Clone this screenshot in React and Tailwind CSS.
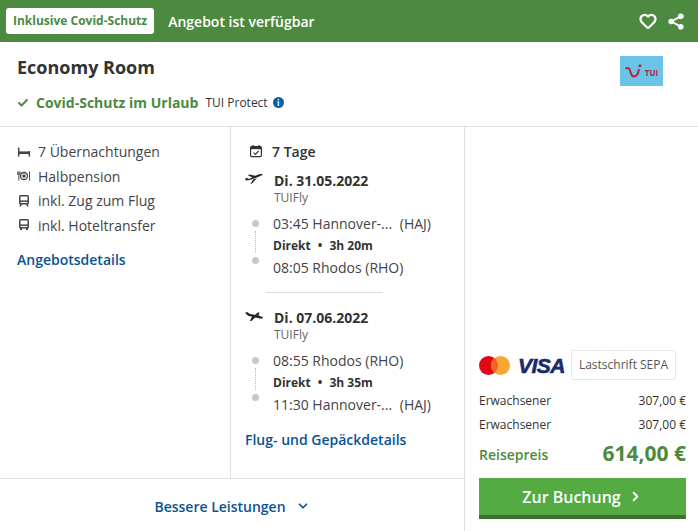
import { Check, ChevronDown, ChevronRight, Heart } from "lucide-react"

function BedIcon() {
  return (
    <svg width="14" height="14" viewBox="0 0 14 14" className="text-[#444]">
      <path d="M1.7 2.5v9M12.3 6v5.5" stroke="currentColor" strokeWidth="1.5" fill="none" />
      <path d="M1.7 6.4h10.6v2.6H1.7z" fill="currentColor" />
    </svg>
  )
}

function MealIcon() {
  return (
    <svg width="14" height="14" viewBox="0 0 14 14" className="text-[#444]">
      <circle cx="7" cy="7" r="3.5" fill="none" stroke="currentColor" strokeWidth="1.3" />
      <circle cx="7" cy="7" r="1.7" fill="currentColor" />
      <path d="M.8 2.5v3.5M1.9 2.5v9M3 2.5v3.5M12.6 2.5v9" stroke="currentColor" strokeWidth="1" fill="none" />
    </svg>
  )
}

function BusIcon({ legs }) {
  return (
    <svg width="14" height="14" viewBox="0 0 14 14" className="text-[#444]">
      <rect x="2.8" y="1.8" width="8.4" height="8" rx="0.8" fill="none" stroke="currentColor" strokeWidth="1.5" />
      <path d="M2.8 7.2h8.4" stroke="currentColor" strokeWidth="1.5" />
      {legs ? (
        <path d="M3.4 10l-1.2 2.6h1.6l1.2-2.6zM10.6 10l1.2 2.6h-1.6L9 10z" fill="currentColor" />
      ) : (
        <path d="M3 10h2v2H3zM9 10h2v2H9z" fill="currentColor" />
      )}
    </svg>
  )
}

function CalendarIcon() {
  return (
    <svg width="14" height="14" viewBox="0 0 14 14" className="text-[#333]">
      <rect x="1.6" y="2.6" width="10.8" height="10" rx="1" fill="none" stroke="currentColor" strokeWidth="1.2" />
      <path d="M1.6 3h10.8v2.2H1.6z" fill="currentColor" />
      <path d="M4 1v2.4M10 1v2.4" stroke="currentColor" strokeWidth="1.4" />
      <path d="M4.6 8.6l1.8 1.8 3.2-3.4" stroke="currentColor" strokeWidth="1.1" fill="none" />
    </svg>
  )
}

function PlaneIcon({ landing }) {
  return (
    <svg width="18" height="10" viewBox="0 0 18 10" className="text-[#222]">
      {landing ? (
        <path d="M0 2L2 1l3 2 6 1c3 .5 7 1.500 7 3 0 1-3 .5-5 0l-3-.6L6.500 10H5l2-4.400L3.500 5zM10 3.600L13 1.500h1.500l-1 3.100z" fill="currentColor" />
      ) : (
        <path d="M.5 6.500C5 6.500 11 4 17 1.200c1-.5 1-1.200-.5-1.200-2.500 0-4.500 1-6 1.800L4 .6l-1 .6 4.500 2.200L3.800 5 1.500 3.800l-1 .4zM8 5.600L12 4 7 9.600 5.500 10z" fill="currentColor" />
      )}
    </svg>
  )
}

function ShareIcon() {
  return (
    <svg width="16" height="17" viewBox="0 0 16 17" className="text-white">
      <path d="M12.600 3.400L3.400 8.500l9.200 5.100" stroke="currentColor" strokeWidth="1.800" fill="none" />
      <circle cx="12.800" cy="3.200" r="2.800" fill="currentColor" />
      <circle cx="3.200" cy="8.500" r="2.800" fill="currentColor" />
      <circle cx="12.800" cy="13.800" r="2.800" fill="currentColor" />
    </svg>
  )
}

function TuiLogo() {
  return (
    <div className="w-[43px] h-[30px] bg-[#6cc3e8] flex items-center justify-center gap-[2px]">
      <svg width="18" height="15" viewBox="0 0 18 15">
        <path d="M.5 4.500c1.800-.8 3.300-.6 4 .6 1 1.800 1.200 7.400 4.400 7.400 3.400 0 4.600-4 5-7.400" stroke="#b3243f" strokeWidth="2" fill="none" />
        <circle cx="15" cy="1.800" r="1.500" fill="#b3243f" />
      </svg>
      <span className="text-[8px] leading-none font-bold text-[#b3243f] mt-[4px]">TUI</span>
    </div>
  )
}

function MastercardVisa() {
  return (
    <div className="flex items-center">
      <svg width="31" height="19" viewBox="0 0 31 19">
        <circle cx="9.500" cy="9.500" r="9.500" fill="#e30613" />
        <circle cx="21.500" cy="9.500" r="9.500" fill="#f9a533" />
        <path d="M15.500 2.100a9.500 9.500 0 0 1 0 14.800 9.500 9.500 0 0 1 0-14.800z" fill="#f16522" />
      </svg>
      <span className="ml-[8px] text-[21px] leading-none font-bold italic text-[#1a2a6c] font-['Liberation_Sans',sans-serif] tracking-[-0.5px] [-webkit-text-stroke:0.6px_#1a2a6c]">VISA</span>
    </div>
  )
}

function Perk({ icon, children }) {
  return (
    <div className="flex items-center h-[24.5px]">
      <span className="w-[21px] flex shrink-0">{icon}</span>
      <span>{children}</span>
    </div>
  )
}

function Flight({ date, landing, from, to, duration }) {
  return (
    <div>
      <div className="flex items-center h-[20px] -ml-[4px]">
        <span className="w-[29px] flex shrink-0 -mt-[3px]"><PlaneIcon landing={landing} /></span>
        <span className="font-bold text-[#333]">{date}</span>
      </div>
      <div className="pl-[25px] text-xs leading-[16px] text-[#666]">TUIFly</div>
      <div className="flex mt-[7px]">
        <div className="w-[24px] shrink-0 flex flex-col items-start pl-[3px] pt-[7px]">
          <span className="w-[7px] h-[7px] rounded-full bg-[#c8c8c8]" />
          <span className="ml-[3px] mt-[4px] h-[22px] border-l border-dotted border-[#bbb]" />
          <span className="mt-[4px] w-[7px] h-[7px] rounded-full bg-[#c8c8c8]" />
        </div>
        <div>
          <div className="h-[22px] leading-[22px]">{from}</div>
          <div className="h-[22px] leading-[22px] text-xs font-bold text-[#333]">Direkt <span className="mx-[4px]">•</span> {duration}</div>
          <div className="h-[22px] leading-[22px]">{to}</div>
        </div>
      </div>
    </div>
  )
}

export default function App() {
  return (
    <div className="w-[698px] h-[531px] bg-white text-[14px] text-[#444] font-['Open_Sans',sans-serif] flex flex-col overflow-hidden">
      <div className="h-[42px] bg-[#4c8a3f] flex items-center pl-[6px] pr-[14px] shrink-0">
        <span className="h-[26px] px-[7px] bg-white rounded-[3px] flex items-center text-xs font-bold text-[#4c8a3f]">Inklusive Covid-Schutz</span>
        <span className="ml-[14px] font-semibold text-white">Angebot ist verfügbar</span>
        <div className="ml-auto flex items-center gap-[11px]">
          <Heart size={18} strokeWidth={3} className="text-white" />
          <ShareIcon />
        </div>
      </div>

      <div className="h-[85px] border-b border-[#e0e0e0] px-[17px] flex justify-between shrink-0">
        <div>
          <h1 className="mt-[12px] text-[18px] leading-[27px] font-bold text-[#333]">Economy Room</h1>
          <div className="mt-[11px] flex items-center">
            <Check size={12} strokeWidth={4} className="text-[#4c8a3f]" />
            <span className="ml-[7px] font-bold text-[#4c8a3f]">Covid-Schutz im Urlaub</span>
            <span className="ml-[7px] text-xs text-[#333]">TUI Protect</span>
            <span className="ml-[5px] w-[11px] h-[11px] rounded-full bg-[#0b5fa5] flex items-center justify-center text-white text-[8px] leading-none font-bold">i</span>
          </div>
        </div>
        <div className="mt-[14px] mr-[18px]"><TuiLogo /></div>
      </div>

      <div className="flex-1 flex min-h-0">
        <div className="w-[465px] border-r border-[#e0e0e0] flex flex-col shrink-0">
          <div className="flex-1 flex min-h-0">
            <div className="w-[231px] border-r border-[#e0e0e0] pl-[17px] pt-[12.5px] shrink-0">
              <Perk icon={<BedIcon />}>7 Übernachtungen</Perk>
              <Perk icon={<MealIcon />}>Halbpension</Perk>
              <Perk icon={<BusIcon legs />}>inkl. Zug zum Flug</Perk>
              <Perk icon={<BusIcon />}>inkl. Hoteltransfer</Perk>
              <a className="block mt-[11.500px] font-semibold text-[#0b5394]">Angebotsdetails</a>
            </div>
            <div className="flex-1 pl-[18px] pt-[13px]">
              <div className="flex items-center h-[22px] font-semibold text-[#333]">
                <span className="w-[23px] flex shrink-0"><CalendarIcon /></span>
                7 Tage
              </div>
              <div className="mt-[8px]">
                <Flight date="Di. 31.05.2022" from={<>03:45 Hannover-... <span className="ml-[4px]">(HAJ)</span></>} to="08:05 Rhodos (RHO)" duration="3h 20m" />
              </div>
              <div className="w-[117px] ml-[17px] mt-[13px] border-t border-[#ddd]" />
              <div className="mt-[14px]">
                <Flight landing date="Di. 07.06.2022" from="08:55 Rhodos (RHO)" to={<>11:30 Hannover-... <span className="ml-[4px]">(HAJ)</span></>} duration="3h 35m" />
              </div>
              <a className="block -ml-[4px] mt-[13px] font-semibold text-[#0b5394]">Flug- und Gepäckdetails</a>
            </div>
          </div>
          <div className="h-[53px] border-t border-[#e0e0e0] flex items-center justify-center gap-[10px] pt-[2px] font-semibold text-[#0b5394] shrink-0">
            Bessere Leistungen
            <ChevronDown size={14} strokeWidth={3} />
          </div>
        </div>

        <div className="flex-1 flex flex-col justify-end pl-[14px] pr-[12px] pb-[12px]">
          <div className="flex items-center">
            <MastercardVisa />
            <span className="ml-[6px] h-[30px] w-[105px] border border-[#e8e8e8] rounded-[2px] flex items-center justify-center text-xs text-[#555]">Lastschrift SEPA</span>
          </div>
          <div className="mt-[9px] flex justify-between h-[24px] items-center text-xs text-[#333]"><span>Erwachsener</span><span>307,00 €</span></div>
          <div className="flex justify-between h-[24px] items-center text-xs text-[#333]"><span>Erwachsener</span><span>307,00 €</span></div>
          <div className="flex justify-between items-end h-[31px]">
            <span className="font-semibold text-[#4c8a3f] leading-[26px]">Reisepreis</span>
            <span className="text-[21px] leading-[30px] font-bold text-[#4c8a3f]">614,00 €</span>
          </div>
          <button className="mt-[10px] h-[41px] w-full bg-[#53ab42] border-b-4 border-[#3f6f34] flex items-center justify-center gap-[7px] text-[16px] font-semibold text-white">
            Zur Buchung
            <ChevronRight size={15} strokeWidth={3} />
          </button>
        </div>
      </div>
    </div>
  )
}
